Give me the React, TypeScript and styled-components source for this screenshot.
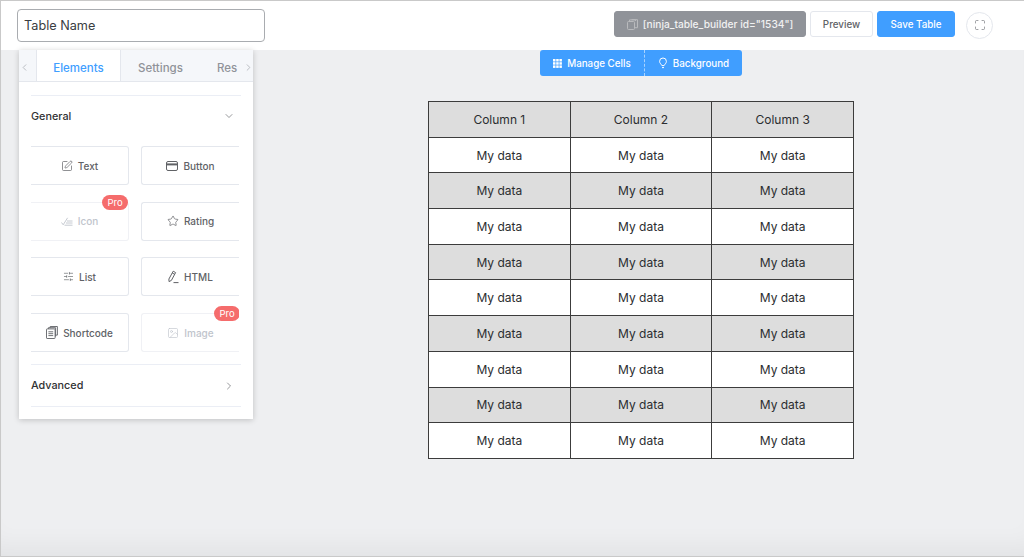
import styled, { createGlobalStyle } from "styled-components";
import {
  ChevronDown,
  ChevronLeft,
  ChevronRight,
  Image as ImageIcon,
  Maximize,
  SlidersHorizontal,
  SquarePen,
  Star,
} from "lucide-react";
import type { ReactNode } from "react";

const GlobalStyle = createGlobalStyle`
  html, body {
    margin: 0;
    padding: 0;
    background-color: #eeeff1;
    font-family: Inter, "Liberation Sans", sans-serif;
  }
  * {
    box-sizing: border-box;
  }
`;

const Page = styled.div`
  width: 1024px;
  height: 557px;
  overflow: hidden;
  display: flex;
  flex-direction: column;
  background-color: #eeeff1;
  border-top: 1px solid #c9c9c9;
  border-left: 1px solid #c9c9c9;
  border-bottom: 1px solid #c9c9c9;
  box-shadow: inset 0 -26px 24px -16px rgba(0, 0, 0, 0.05);
`;

const TopBar = styled.header`
  height: 49px;
  flex-shrink: 0;
  display: flex;
  align-items: center;
  background-color: #fff;
  padding: 0 31px 3px 16px;
`;

const NameInput = styled.input`
  width: 248px;
  height: 33px;
  margin-top: 2px;
  padding: 0 6px;
  border: 1px solid #a9acb0;
  border-radius: 4px;
  background-color: #fff;
  color: #3a3d42;
  font-family: inherit;
  font-size: 12.7px;
  outline: none;
`;

const TopActions = styled.div`
  margin-left: auto;
  display: flex;
  align-items: center;
  gap: 4px;
`;

const ActionButton = styled.button<{ $tone: "grey" | "white" | "blue" }>`
  height: 26px;
  display: inline-flex;
  align-items: center;
  justify-content: center;
  gap: 5px;
  padding: 0;
  border-radius: 3px;
  font-family: inherit;
  font-size: 9.8px;
  font-weight: 500;
  border: 1px solid
    ${(p) => (p.$tone === "white" ? "#e4e7ed" : p.$tone === "blue" ? "#409eff" : "#909399")};
  color: ${(p) => (p.$tone === "white" ? "#606266" : "#fff")};
  background-color: ${(p) =>
    p.$tone === "white" ? "#fff" : p.$tone === "blue" ? "#409eff" : "#909399"};
`;

const ShortcodeButton = styled(ActionButton)`
  width: 192px;
  font-size: 10.2px;
  color: #f1f1f2;
`;

const PreviewButton = styled(ActionButton)`
  width: 63px;
`;

const SaveButton = styled(ActionButton)`
  width: 78px;
`;

const FullscreenButton = styled.button`
  width: 27px;
  height: 27px;
  margin: 2px 0 0 7px;
  display: inline-flex;
  align-items: center;
  justify-content: center;
  padding: 0;
  border: 1px solid #e4e7ed;
  border-radius: 50%;
  background-color: #fff;
  color: #77797e;
`;

const Workspace = styled.div`
  flex: 1;
  display: flex;
  align-items: flex-start;
  padding-left: 18px;
`;

const Panel = styled.aside`
  width: 234px;
  flex-shrink: 0;
  background-color: #fff;
  box-shadow: 0 1px 6px rgba(0, 0, 0, 0.2);
`;

const TabStrip = styled.div`
  height: 32px;
  display: flex;
  align-items: center;
  background-color: #f5f7fa;
  border-bottom: 1px solid #e4e7ed;
  color: #b5b8bd;
  overflow: hidden;
`;

const ArrowSlot = styled.span<{ $side: "left" | "right" }>`
  width: 17px;
  flex-shrink: 0;
  display: flex;
  align-items: center;
  justify-content: ${(p) => (p.$side === "left" ? "flex-start" : "flex-end")};
  padding: 3px 0 0;
`;

const Tab = styled.span<{ $active?: boolean; $width: number }>`
  width: ${(p) => p.$width}px;
  height: 32px;
  flex-shrink: 0;
  display: flex;
  align-items: center;
  justify-content: center;
  padding-top: 4px;
  font-size: 11.5px;
  font-weight: 500;
  color: ${(p) => (p.$active ? "#409eff" : "#909399")};
  background-color: ${(p) => (p.$active ? "#fff" : "transparent")};
  border-left: ${(p) => (p.$active ? "1px solid #e4e7ed" : "0")};
  border-right: ${(p) => (p.$active ? "1px solid #e4e7ed" : "0")};
`;

const CutTab = styled(Tab)`
  justify-content: flex-start;
  padding-left: 17px;
`;

const PanelBody = styled.div`
  padding: 13px 12px 12px;
`;

const SectionRow = styled.div<{ $height: number; $closed?: boolean }>`
  height: ${(p) => p.$height}px;
  display: flex;
  align-items: center;
  justify-content: space-between;
  padding-right: 6px;
  border-top: 1px solid #ebeef5;
  border-bottom: ${(p) => (p.$closed ? "1px solid #ebeef5" : "0")};
  font-size: 10.8px;
  font-weight: 500;
  color: #303133;
`;

const ElementGrid = styled.div`
  width: 208px;
  display: grid;
  grid-template-columns: 98px 98px;
  grid-auto-rows: 39px;
  column-gap: 12px;
  row-gap: 16.7px;
  overflow: hidden;
  margin-top: 10px;
  margin-bottom: 12px;
`;

const ElementCard = styled.div<{ $side: "left" | "right"; $disabled?: boolean }>`
  position: relative;
  display: flex;
  align-items: center;
  justify-content: center;
  gap: 5px;
  font-size: 10px;
  font-weight: 500;
  background-color: #fff;
  color: ${(p) => (p.$disabled ? "#c0c4cc" : "#606266")};
  border: 1px solid ${(p) => (p.$disabled ? "#f0f1f5" : "#e4e7ed")};
  border-radius: 3px;
  ${(p) =>
    p.$side === "left"
      ? "border-left: 0; border-top-left-radius: 0; border-bottom-left-radius: 0;"
      : "border-right: 0; border-top-right-radius: 0; border-bottom-right-radius: 0;"}
`;

const ProBadge = styled.span<{ $side: "left" | "right" }>`
  position: absolute;
  top: -8px;
  right: ${(p) => (p.$side === "left" ? "0" : "-1px")};
  width: 26px;
  height: 15px;
  display: flex;
  align-items: center;
  justify-content: center;
  border-radius: 8px;
  background-color: #f56c6c;
  color: #fff;
  font-size: 9.5px;
  font-weight: 400;
`;

const Canvas = styled.main`
  flex: 1;
  display: flex;
  flex-direction: column;
  align-items: center;
  padding-left: 5px;
`;

const CanvasToolbar = styled.div`
  height: 26px;
  display: flex;
  border-radius: 3px;
  overflow: hidden;
  background-color: #409eff;
  color: #fff;
  font-size: 9.8px;
  font-weight: 500;
`;

const ToolbarItem = styled.span<{ $width: number; $divider?: boolean }>`
  width: ${(p) => p.$width}px;
  display: flex;
  align-items: center;
  justify-content: center;
  gap: 5px;
  border-left: ${(p) => (p.$divider ? "1px dashed #a9d3ff" : "0")};
`;

const DataTable = styled.table`
  width: 426px;
  height: 358px;
  margin-top: 25px;
  border-collapse: collapse;
  table-layout: fixed;
  font-size: 12px;
  color: #2b2d30;
`;

const Cell = styled.td<{ $striped: boolean }>`
  height: 35.7px;
  padding: 0;
  text-align: center;
  border: 1px solid #3c3c3c;
  background-color: ${(p) => (p.$striped ? "#dddddd" : "#fff")};
`;

const tableRows = Array.from({ length: 10 }, (_, i) => i);
const tableCols = [1, 2, 3];

const ButtonGlyph = () => (
  <svg width="12" height="10" viewBox="0 0 12 10" fill="none" stroke="currentColor" strokeWidth="1">
    <rect x="0.5" y="0.5" width="11" height="9" rx="1.5" />
    <rect x="1" y="2.4" width="10" height="2" fill="currentColor" stroke="none" />
  </svg>
);

const CheckLinesGlyph = () => (
  <svg width="12" height="9" viewBox="0 0 12 9" fill="none" stroke="currentColor" strokeWidth="0.9">
    <path d="M0.5 5.5 2.2 7.8 6.6 0.8" />
    <path d="M6 4h5.5M5 6h6.5M3.5 8.2h8" />
  </svg>
);

const PenGlyph = () => (
  <svg width="11" height="14" viewBox="0 0 11 14" fill="none" stroke="currentColor" strokeWidth="1" strokeLinejoin="round">
    <path d="M5.2 1.2 7.6 2.6 3.4 10.4 1 11.6 0.9 9Z" />
    <path d="M4.2 2.9 6.6 4.3" />
    <path d="M5.5 12.6h5" />
  </svg>
);

const ShortcodeGlyph = () => (
  <svg width="12" height="13" viewBox="0 0 12 13" fill="none" stroke="currentColor" strokeWidth="0.9">
    <rect x="0.5" y="2.9" width="8.6" height="9.6" rx="0.6" />
    <path d="M2.4 2.9V1.7h7.2v8.6h-0.5M4.2 1.7V0.5h7.2v8.6h-1.8" />
    <path d="M2.4 5.8h4.8M2.4 7.7h4.8M2.4 9.6h4.8" />
  </svg>
);

const CopyGlyph = () => (
  <svg width="11" height="11" viewBox="0 0 11 11" fill="none" stroke="#b9babd" strokeWidth="1">
    <rect x="0.5" y="2.5" width="7" height="8" rx="1" />
    <path d="M2.5 2.5V0.9h6V2M4.5 0.7h6v8H8" />
  </svg>
);

const CellsGlyph = () => (
  <svg width="9" height="9" viewBox="0 0 9 9" fill="currentColor">
    {[0, 3.2, 6.4].map((x) =>
      [0, 3.2, 6.4].map((y) => <rect key={`${x}-${y}`} x={x} y={y} width="2.5" height="2.5" />)
    )}
  </svg>
);

const BulbGlyph = () => (
  <svg width="10" height="12" viewBox="0 0 10 12" fill="none" stroke="currentColor" strokeWidth="1">
    <path d="M5 1a3.4 3.4 0 0 0-3.4 3.4C1.6 6.2 3.4 7.4 3.9 8.6h2.2C6.6 7.4 8.4 6.2 8.4 4.4A3.4 3.4 0 0 0 5 1Z" />
    <path d="M4 10.6h2" />
  </svg>
);

type CardInfo = { label: string; icon: ReactNode; disabled?: boolean; pro?: boolean };

const cards: CardInfo[] = [
  { label: "Text", icon: <SquarePen size={12} strokeWidth={1.4} /> },
  { label: "Button", icon: <ButtonGlyph /> },
  { label: "Icon", icon: <CheckLinesGlyph />, disabled: true, pro: true },
  { label: "Rating", icon: <Star size={12} strokeWidth={1.4} /> },
  { label: "List", icon: <SlidersHorizontal size={11} strokeWidth={1.4} /> },
  { label: "HTML", icon: <PenGlyph /> },
  { label: "Shortcode", icon: <ShortcodeGlyph /> },
  { label: "Image", icon: <ImageIcon size={12} strokeWidth={1.3} />, disabled: true, pro: true },
];

export default function App() {
  return (
    <>
      <GlobalStyle />
      <Page>
        <TopBar>
          <NameInput defaultValue="Table Name" />
          <TopActions>
            <ShortcodeButton $tone="grey">
              <CopyGlyph />
              [ninja_table_builder id="1534"]
            </ShortcodeButton>
            <PreviewButton $tone="white">Preview</PreviewButton>
            <SaveButton $tone="blue">Save Table</SaveButton>
            <FullscreenButton>
              <Maximize size={12} strokeWidth={1.4} />
            </FullscreenButton>
          </TopActions>
        </TopBar>
        <Workspace>
          <Panel>
            <TabStrip>
              <ArrowSlot $side="left">
                <ChevronLeft size={11} />
              </ArrowSlot>
              <Tab $active $width={85}>Elements</Tab>
              <Tab $width={79}>Settings</Tab>
              <CutTab $width={37}>Res</CutTab>
              <ArrowSlot $side="right">
                <ChevronRight size={11} />
              </ArrowSlot>
            </TabStrip>
            <PanelBody>
              <SectionRow $height={41}>
                General
                <ChevronDown size={12} strokeWidth={1.3} color="#606266" />
              </SectionRow>
              <ElementGrid>
                {cards.map((card, i) => {
                  const side = i % 2 === 0 ? "left" : "right";
                  return (
                    <ElementCard key={card.label} $side={side} $disabled={card.disabled}>
                      {card.icon}
                      {card.label}
                      {card.pro && <ProBadge $side={side}>Pro</ProBadge>}
                    </ElementCard>
                  );
                })}
              </ElementGrid>
              <SectionRow $height={43} $closed>
                Advanced
                <ChevronRight size={12} strokeWidth={1.3} color="#606266" />
              </SectionRow>
            </PanelBody>
          </Panel>
          <Canvas>
            <CanvasToolbar>
              <ToolbarItem $width={104}>
                <CellsGlyph />
                Manage Cells
              </ToolbarItem>
              <ToolbarItem $width={98} $divider>
                <BulbGlyph />
                Background
              </ToolbarItem>
            </CanvasToolbar>
            <DataTable>
              <tbody>
                {tableRows.map((row) => (
                  <tr key={row}>
                    {tableCols.map((col) => (
                      <Cell key={col} $striped={row % 2 === 0}>
                        {row === 0 ? `Column ${col}` : "My data"}
                      </Cell>
                    ))}
                  </tr>
                ))}
              </tbody>
            </DataTable>
          </Canvas>
        </Workspace>
      </Page>
    </>
  );
}
